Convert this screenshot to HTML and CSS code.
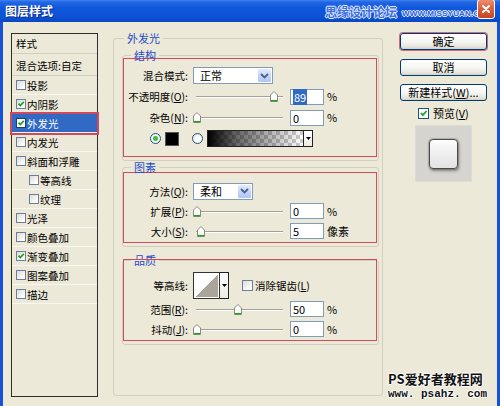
FILE: index.html
```html
<!DOCTYPE html>
<html lang="zh-CN">
<head>
<meta charset="utf-8">
<title>图层样式</title>
<link rel="stylesheet" href="styles.css">
</head>
<body>
<div class="window">
  <div class="titlebar">
    <span class="title">图层样式</span>
    <span class="wm-top"><span class="wm-cn">思缘设计论坛</span><span class="wm-en">WWW.MISSYUAN.COM</span></span>
    <span class="close"><svg width="10" height="10" viewBox="0 0 10 10"><path d="M2 2 L8 8 M8 2 L2 8" stroke="#fff" stroke-width="2" stroke-linecap="round"/></svg></span>
  </div>
  <div class="content">
    <div class="stylelist">
      <div class="li head">样式</div>
      <div class="li head2">混合选项:自定</div>
      <div class="li"><span class="cb"></span>投影</div>
      <div class="li"><span class="cb"><svg viewBox="0 0 8 8"><path d="M1.5 3.6 L3.3 5.6 L6.8 1.8" stroke="#21A121" stroke-width="1.7" fill="none"/></svg></span>内阴影</div>
      <div class="li sel"><span class="cb"><svg viewBox="0 0 8 8"><path d="M1.5 3.6 L3.3 5.6 L6.8 1.8" stroke="#21A121" stroke-width="1.7" fill="none"/></svg></span>外发光</div>
      <div class="li"><span class="cb"></span>内发光</div>
      <div class="li"><span class="cb"></span>斜面和浮雕</div>
      <div class="li sub"><span class="cb"></span>等高线</div>
      <div class="li sub"><span class="cb"></span>纹理</div>
      <div class="li"><span class="cb"></span>光泽</div>
      <div class="li"><span class="cb"></span>颜色叠加</div>
      <div class="li"><span class="cb"><svg viewBox="0 0 8 8"><path d="M1.5 3.6 L3.3 5.6 L6.8 1.8" stroke="#21A121" stroke-width="1.7" fill="none"/></svg></span>渐变叠加</div>
      <div class="li"><span class="cb"></span>图案叠加</div>
      <div class="li"><span class="cb"></span>描边</div>
    </div>

    <fieldset class="outer">
      <legend class="lg">外发光</legend>

      <fieldset class="sec sec1">
        <legend class="lg">结构</legend>
        <div class="red red1">
          <div class="row">
            <span class="lbl">混合模式:</span>
            <span class="combo w80"><span class="val">正常</span><span class="cbtn"><svg width="9" height="6" viewBox="0 0 9 6"><path d="M1 1 L4.5 4.5 L8 1" stroke="#4D6185" stroke-width="1.8" fill="none"/></svg></span></span>
          </div>
          <div class="row">
            <span class="lbl">不透明度(<u>O</u>):</span>
            <span class="slider"><span class="track"></span><svg class="thumb" style="left:77px" width="8" height="11" viewBox="0 0 8 11"><path d="M0.5 4 L4 0.5 L7.5 4 V10.5 H0.5 Z" fill="#fff" stroke="#8A8A80"/><path d="M1 9.6 H7" stroke="#21A121" stroke-width="1.4"/></svg></span>
            <span class="num"><span class="hl">89</span></span><span class="unit">%</span>
          </div>
          <div class="row">
            <span class="lbl">杂色(<u>N</u>):</span>
            <span class="slider"><span class="track"></span><svg class="thumb" style="left:0px" width="8" height="11" viewBox="0 0 8 11"><path d="M0.5 4 L4 0.5 L7.5 4 V10.5 H0.5 Z" fill="#fff" stroke="#8A8A80"/><path d="M1 9.6 H7" stroke="#21A121" stroke-width="1.4"/></svg></span>
            <span class="num">0</span><span class="unit">%</span>
          </div>
          <div class="row radios">
            <span class="radio on"></span>
            <span class="swatch"></span>
            <span class="radio r2"></span>
            <span class="grad"></span><span class="dd tall"><svg width="5" height="3" viewBox="0 0 5 3"><path d="M0 0 H5 L2.5 3 Z" fill="#000"/></svg></span>
          </div>
        </div>
      </fieldset>

      <fieldset class="sec sec2">
        <legend class="lg">图素</legend>
        <div class="red red2">
          <div class="row h20">
            <span class="lbl">方法(<u>Q</u>):</span>
            <span class="combo w60"><span class="val">柔和</span><span class="cbtn"><svg width="9" height="6" viewBox="0 0 9 6"><path d="M1 1 L4.5 4.5 L8 1" stroke="#4D6185" stroke-width="1.8" fill="none"/></svg></span></span>
          </div>
          <div class="row h20">
            <span class="lbl">扩展(<u>P</u>):</span>
            <span class="slider"><span class="track"></span><svg class="thumb" style="left:0px" width="8" height="11" viewBox="0 0 8 11"><path d="M0.5 4 L4 0.5 L7.5 4 V10.5 H0.5 Z" fill="#fff" stroke="#8A8A80"/><path d="M1 9.6 H7" stroke="#21A121" stroke-width="1.4"/></svg></span>
            <span class="num">0</span><span class="unit">%</span>
          </div>
          <div class="row h20">
            <span class="lbl">大小(<u>S</u>):</span>
            <span class="slider"><span class="track"></span><svg class="thumb" style="left:4px" width="8" height="11" viewBox="0 0 8 11"><path d="M0.5 4 L4 0.5 L7.5 4 V10.5 H0.5 Z" fill="#fff" stroke="#8A8A80"/><path d="M1 9.6 H7" stroke="#21A121" stroke-width="1.4"/></svg></span>
            <span class="num">5</span><span class="unit">像素</span>
          </div>
        </div>
      </fieldset>

      <fieldset class="sec sec3">
        <legend class="lg">品质</legend>
        <div class="red red3">
          <div class="row h28">
            <span class="lbl">等高线:</span>
            <span class="contour"></span><span class="dd ctr"><svg width="5" height="3" viewBox="0 0 5 3"><path d="M0 0 H5 L2.5 3 Z" fill="#000"/></svg></span>
            <span class="cb cb11 aa"></span><span class="aatext">消除锯齿(<u>L</u>)</span>
          </div>
          <div class="row h20">
            <span class="lbl">范围(<u>R</u>):</span>
            <span class="slider"><span class="track"></span><svg class="thumb" style="left:41px" width="8" height="11" viewBox="0 0 8 11"><path d="M0.5 4 L4 0.5 L7.5 4 V10.5 H0.5 Z" fill="#fff" stroke="#8A8A80"/><path d="M1 9.6 H7" stroke="#21A121" stroke-width="1.4"/></svg></span>
            <span class="num">50</span><span class="unit">%</span>
          </div>
          <div class="row h20">
            <span class="lbl">抖动(<u>J</u>):</span>
            <span class="slider"><span class="track"></span><svg class="thumb" style="left:0px" width="8" height="11" viewBox="0 0 8 11"><path d="M0.5 4 L4 0.5 L7.5 4 V10.5 H0.5 Z" fill="#fff" stroke="#8A8A80"/><path d="M1 9.6 H7" stroke="#21A121" stroke-width="1.4"/></svg></span>
            <span class="num">0</span><span class="unit">%</span>
          </div>
        </div>
      </fieldset>
    </fieldset>

    <div class="side">
      <div class="btn ok">确定</div>
      <div class="btn b2">取消</div>
      <div class="btn b3">新建样式(<u>W</u>)...</div>
      <div class="preview-row"><span class="cb cb11"><svg viewBox="0 0 9 9"><path d="M1.8 4 L3.8 6.2 L7.6 2" stroke="#21A121" stroke-width="1.8" fill="none"/></svg></span><span>预览(<u>V</u>)</span></div>
      <div class="preview"><span class="pv-square"></span></div>
      <div class="wm-bottom">
        <div class="wm-b1">PS爱好者教程网</div>
        <div class="wm-b2">www. psahz. com</div>
      </div>
    </div>
  </div>
</div>
</body>
</html>
```

FILE: styles.css
```css
* { box-sizing: border-box; }
html, body { margin: 0; padding: 0; }
body {
  width: 500px;
  height: 406px;
  overflow: hidden;
  background: #ECE9D8;
  font-family: "Noto Sans CJK SC", "Noto Sans", sans-serif;
  font-size: 11px;
  color: #000;
}
u { text-decoration: underline; text-underline-offset: 1px; }

.window {
  width: 500px;
  height: 406px;
  display: flex;
  flex-direction: column;
  background: #ECE9D8;
}

/* title bar */
.titlebar {
  position: relative;
  height: 22px;
  flex: none;
  display: flex;
  align-items: center;
  padding: 0 5px 0 5px;
  background: linear-gradient(#3D86F0 0, #2466E4 2px, #0F57DC 35%, #0C52D6 75%, #0A47C4 100%);
}
.title {
  color: #fff;
  font-weight: bold;
  font-size: 12px;
  line-height: 14px;
  text-shadow: 1px 1px 0 #0A2A8A;
}
.wm-top {
  position: absolute;
  left: 325px;
  top: 5px;
  display: flex;
  align-items: flex-end;
  gap: 5px;
  white-space: nowrap;
}
.wm-cn {
  font-size: 12px;
  line-height: 14px;
  font-weight: bold;
  color: #3B6DE6;
  text-shadow: -1px 0 #E8F0FF, 1px 0 #E8F0FF, 0 -1px #E8F0FF, 0 1px #E8F0FF;
}
.wm-en {
  font-family: "Liberation Sans", sans-serif;
  font-size: 8px;
  line-height: 10px;
  font-weight: bold;
  color: #2E5FD8;
  letter-spacing: 0.2px;
  text-shadow: -1px 0 #E8F0FF, 1px 0 #E8F0FF, 0 -1px #E8F0FF, 0 1px #E8F0FF;
}
.close {
  position: relative;
  margin-left: auto;
  align-self: flex-start;
  margin-top: -1px;
  width: 18px;
  height: 20px;
  border: 1px solid #fff;
  border-radius: 3px;
  background: linear-gradient(#EB8E70, #DC6241 45%, #C7441F);
  display: flex;
  align-items: center;
  justify-content: center;
}
.close svg { display: block; }

/* content */
.content {
  flex: 1;
  display: flex;
  align-items: flex-start;
  padding: 11px 0 0 8px;
  border-left: 3px solid #1752D6;
  border-right: 3px solid #1752D6;
}

/* left list */
.stylelist {
  flex: none;
  width: 87px;
  height: 364px;
  border: 1px solid #2F2F2A;
  background: #ECE9D8;
  font-size: 10.5px;
}
.li {
  height: 19px;
  display: flex;
  align-items: center;
  padding-left: 4px;
  border-bottom: 1px solid #F8F7F1;
  line-height: 13px;
  white-space: nowrap;
}
.li.head { height: 20px; padding-left: 4px; border-bottom: 1px solid #D3D0C2; }
.li.head2 { height: 22px; padding-left: 4px; padding-top: 2px; border-bottom: 1px solid #D3D0C2; }
.li.sub { padding-left: 17px; }
.li.sel {
  background: #316AC5;
  color: #fff;
  outline: 2px solid #D04A5C;
  outline-offset: 0;
  position: relative;
}
.cb {
  flex: none;
  width: 10px;
  height: 10px;
  margin-right: 1px;
  border: 1px solid #6A7D9E;
  background: linear-gradient(135deg, #DCDBD3, #FFFFFF 85%);
  display: inline-flex;
}
.cb svg { width: 100%; height: 100%; display: block; }
.sel .cb { background: #fff; border-color: #1C3F7A; }
.cb11 { width: 11px; height: 11px; }

/* main fieldset */
.outer {
  flex: none;
  margin: 1px 0 0 15px;
  width: 270px;
  height: 362px;
  padding: 0 3px 0 8px;
  border: 1px solid #D0D0BF;
  border-radius: 3px;
  min-width: 0;
}
.lg {
  font-size: 11px;
  line-height: 8px;
  height: 8px;
  padding: 0 3px;
  margin-left: 2px;
  color: #1F4BC9;
  white-space: nowrap;
}
.sec {
  margin: 0;
  padding: 0 1px 3px 0;
  border: 1px solid #D0D0BF;
  border-radius: 3px;
  min-width: 0;
}
.sec .lg { margin-left: 8px; }
.sec1 { margin-top: 9px; }
.sec2 { margin-top: 2px; }
.sec3 { margin-top: 9px; }

.red { border: 1px solid #D24B5A; font-size: 10.5px; }
.red1 { margin-top: -1px; padding: 6px 0 7px; }
.red2 { margin-top: 1px; padding: 8px 0 1px; }
.red3 { margin-top: -5px; padding: 11px 0 1px; position: relative; }

.row {
  height: 21px;
  display: flex;
  align-items: center;
  white-space: nowrap;
}
.row.h20 { height: 20px; }
.row.h28 { height: 28px; }
.lbl {
  flex: none;
  width: 64px;
  margin-right: 5px;
  text-align: right;
  line-height: 13px;
}

.combo {
  flex: none;
  height: 17px;
  border: 1px solid #7F9DB9;
  background: #fff;
  display: flex;
  align-items: center;
  font-size: 11px;
}
.w80 { width: 80px; }
.w60 { width: 60px; }
.combo .val { flex: 1; padding-left: 6px; line-height: 13px; }
.cbtn {
  width: 15px;
  height: 15px;
  border: 1px solid #fff;
  border-radius: 2px;
  background: linear-gradient(#E2EBFE, #C0D2FA 60%, #B1C6F6);
  display: flex;
  align-items: center;
  justify-content: center;
}

.slider {
  flex: none;
  position: relative;
  width: 90px;
  height: 11px;
  margin-right: 7px;
}
.track {
  position: absolute;
  left: 3px;
  right: 0;
  top: 5px;
  height: 2px;
  border-top: 1px solid #A3A197;
  border-bottom: 1px solid #FFFFFF;
}
.thumb { position: absolute; top: 0; display: block; }

.num {
  flex: none;
  width: 34px;
  height: 16px;
  border: 1px solid #7F9DB9;
  background: #fff;
  padding-left: 2px;
  line-height: 14px;
  margin-right: 3px;
  font-size: 11px;
}
.hl { background: #316AC5; color: #fff; padding: 0 1px; }
.unit { line-height: 13px; font-size: 11px; }

.radios { padding-left: 26px; }
.radio {
  flex: none;
  width: 11px;
  height: 11px;
  border-radius: 50%;
  border: 1px solid #1C5180;
  background: radial-gradient(circle at 60% 65%, #FFFFFF 30%, #DCDCD6 100%);
}
.radio.on { background: radial-gradient(circle, #3FBF3F 0 2px, #A8E0A8 2.6px, #FFFFFF 3.2px, #E6E6E0 100%); }
.radio.r2 { margin-left: 13px; }
.swatch {
  flex: none;
  width: 14px;
  height: 14px;
  margin-left: 4px;
  background: #000;
  border: 1px solid #555;
}
.grad {
  flex: none;
  width: 97px;
  height: 17px;
  margin-left: 4px;
  border: 1px solid #222;
  background:
    linear-gradient(to right, #000 0, rgba(0,0,0,0.6) 30%, rgba(0,0,0,0) 100%),
    repeating-conic-gradient(#CCCCCC 0 25%, #FFFFFF 0 50%) 0 0 / 8px 8px;
}
.dd {
  flex: none;
  width: 9px;
  border: 1px solid #222;
  border-left: none;
  background: linear-gradient(#FFFFFF, #ECEBE4);
  display: flex;
  align-items: center;
  justify-content: center;
}
.dd.tall { height: 17px; }
.dd.ctr { height: 27px; }
.contour {
  flex: none;
  width: 27px;
  height: 27px;
  border: 1px solid #333;
  background: linear-gradient(to top left, #A9A598 50%, #FFFFFF 50%);
  box-shadow: inset 0 0 0 1px #fff;
}
.aa { margin-left: 13px; margin-right: 2px; }
.aatext { line-height: 13px; }

/* right side */
.side {
  flex: none;
  width: 87px;
  height: 368px;
  margin-left: 17px;
  display: flex;
  flex-direction: column;
}
.btn {
  height: 17px;
  border: 1px solid #003C74;
  border-radius: 3px;
  background: linear-gradient(#FFFFFF, #F4F4F0 55%, #E6E4DB 85%, #D6D0C5);
  text-align: center;
  line-height: 15px;
  white-space: nowrap;
}
.btn.ok { box-shadow: 0 0 0 1px #D06A7E; }
.btn.b2 { margin-top: 9px; }
.btn.b3 { margin-top: 8px; }
.preview-row {
  margin-top: 2px;
  height: 20px;
  padding-left: 18px;
  display: flex;
  align-items: center;
  gap: 3px;
  line-height: 13px;
}
.preview-row .cb { border-color: #1C5180; background: #fff; }
.preview {
  margin: 2px 0 0 15px;
  width: 57px;
  height: 57px;
  background: #D5D4CF;
  border: 1px solid #DCDBD6;
  padding: 13px 0 0 13px;
}
.pv-square {
  display: block;
  width: 29px;
  height: 30px;
  border: 1px solid #4A4A48;
  border-radius: 4px;
  background: linear-gradient(#FFFFFF 0, #F4F4F4 25%, #E3E3E3 100%);
  box-shadow: 0 0 2px rgba(0,0,0,0.55), 1px 2px 3px rgba(0,0,0,0.35);
}
.wm-bottom {
  margin-top: auto;
  margin-left: -12px;
  width: 104px;
  white-space: nowrap;
}
.wm-b1 {
  font-size: 13px;
  line-height: 19px;
  height: 19px;
  font-weight: bold;
  color: #111;
  text-shadow: -1px 0 #fff, 1px 0 #fff, 0 -1px #fff, 0 1px #fff;
}
.wm-b2 {
  font-family: "Liberation Mono", monospace;
  font-size: 11px;
  line-height: 13px;
  height: 13px;
  font-weight: bold;
  color: #111;
  letter-spacing: 0;
  text-shadow: -1px 0 #fff, 1px 0 #fff, 0 -1px #fff, 0 1px #fff;
}
```
